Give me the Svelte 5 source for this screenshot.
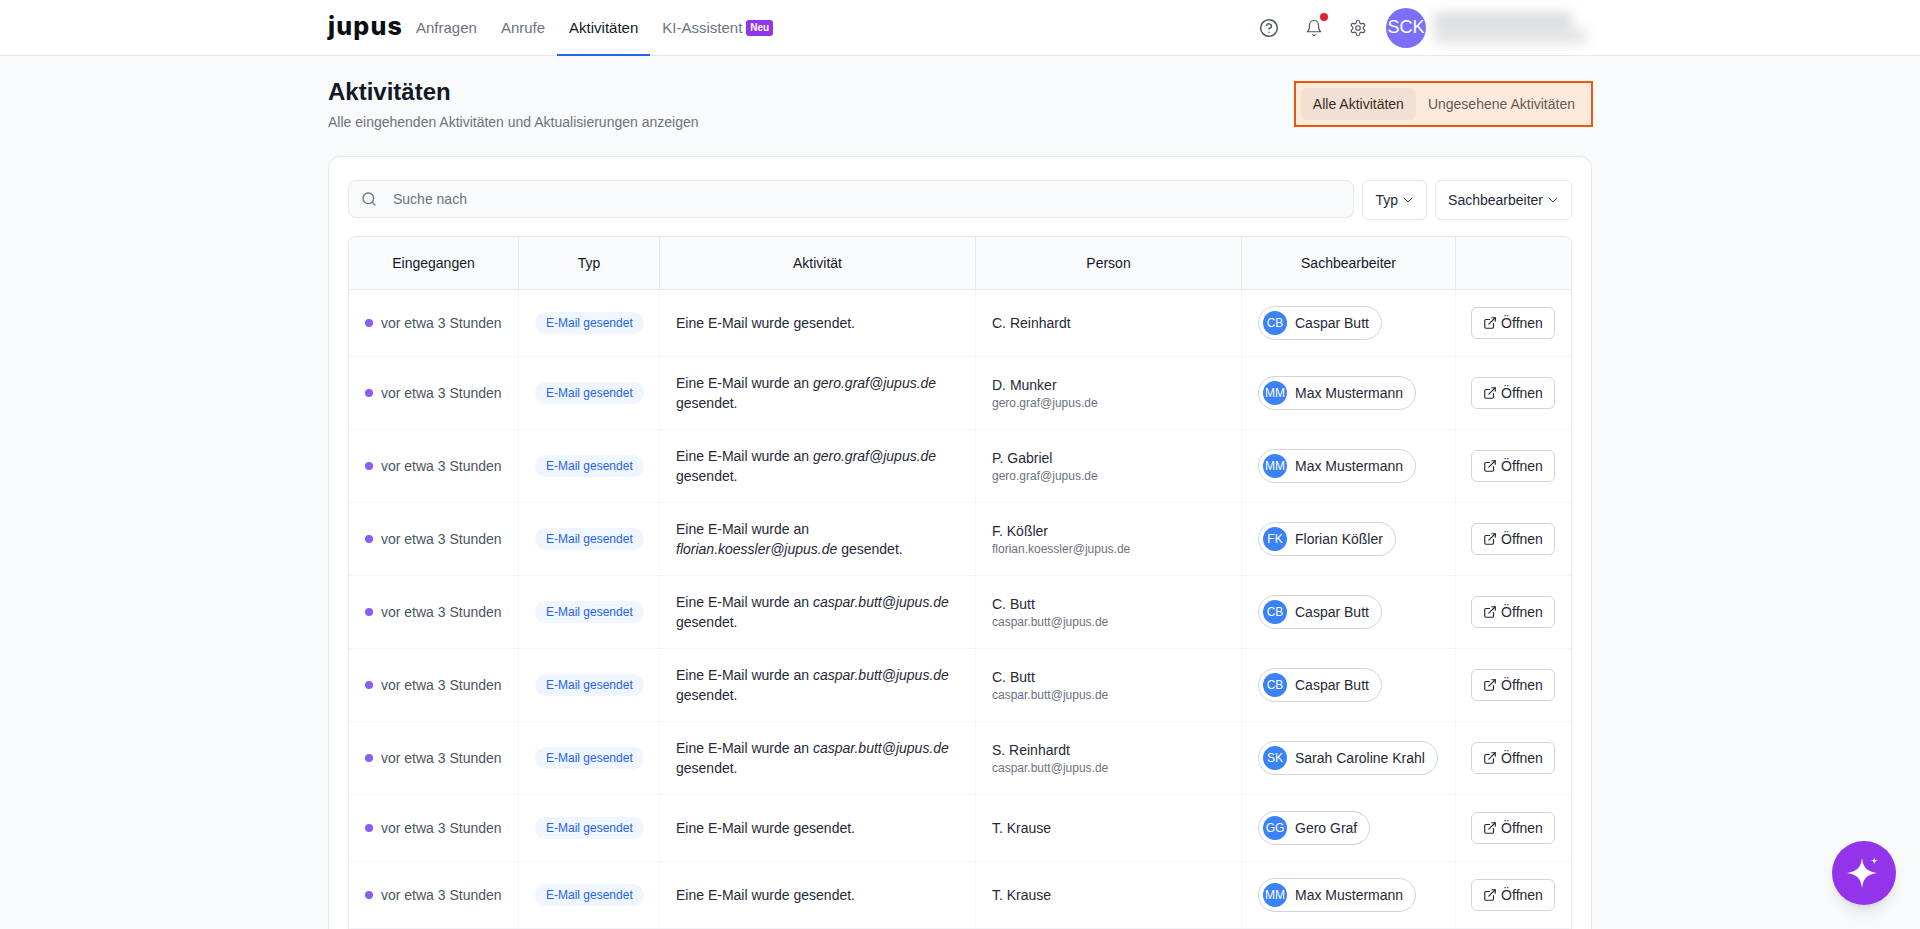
<script lang="ts">
  const rows = [
    { text: "", person: "C. Reinhardt", mail: "", agent: "Caspar Butt", initials: "CB" },
    { text: "gero.graf@jupus.de", person: "D. Munker", mail: "gero.graf@jupus.de", agent: "Max Mustermann", initials: "MM" },
    { text: "gero.graf@jupus.de", person: "P. Gabriel", mail: "gero.graf@jupus.de", agent: "Max Mustermann", initials: "MM" },
    { text: "florian.koessler@jupus.de", person: "F. Kößler", mail: "florian.koessler@jupus.de", agent: "Florian Kößler", initials: "FK", wrap: true },
    { text: "caspar.butt@jupus.de", person: "C. Butt", mail: "caspar.butt@jupus.de", agent: "Caspar Butt", initials: "CB" },
    { text: "caspar.butt@jupus.de", person: "C. Butt", mail: "caspar.butt@jupus.de", agent: "Caspar Butt", initials: "CB" },
    { text: "caspar.butt@jupus.de", person: "S. Reinhardt", mail: "caspar.butt@jupus.de", agent: "Sarah Caroline Krahl", initials: "SK" },
    { text: "", person: "T. Krause", mail: "", agent: "Gero Graf", initials: "GG" },
    { text: "", person: "T. Krause", mail: "", agent: "Max Mustermann", initials: "MM" },
  ];
  const navItems = ["Anfragen", "Anrufe", "Aktivitäten"];
</script>

<div class="page">
  <header class="topbar">
    <div class="topbar-inner">
      <div class="left">
        <span class="logo">jupus</span>
        <nav class="nav">
          {#each navItems as item}
            <span class="nav-item" class:active={item === "Aktivitäten"}>{item}</span>
          {/each}
          <span class="nav-item">KI-Assistent <span class="new-badge">Neu</span></span>
        </nav>
      </div>
      <div class="right">
        <svg class="icon help" viewBox="0 0 24 24"><circle cx="12" cy="12" r="10" /><path d="M9.09 9a3 3 0 0 1 5.83 1c0 2-3 3-3 3" /><path d="M12 17h.01" /></svg>
        <span class="bell-wrap">
          <svg class="icon bell" viewBox="0 0 24 24"><path d="M6 8a6 6 0 0 1 12 0c0 7 3 9 3 9H3s3-2 3-9" /><path d="M10.3 21a1.94 1.94 0 0 0 3.4 0" /></svg>
          <span class="red-dot"></span>
        </span>
        <svg class="icon gear" viewBox="0 0 24 24"><path d="M12.22 2h-.44a2 2 0 0 0-2 2v.18a2 2 0 0 1-1 1.73l-.43.25a2 2 0 0 1-2 0l-.15-.08a2 2 0 0 0-2.73.73l-.22.38a2 2 0 0 0 .73 2.73l.15.1a2 2 0 0 1 1 1.72v.51a2 2 0 0 1-1 1.74l-.15.09a2 2 0 0 0-.73 2.73l.22.38a2 2 0 0 0 2.73.73l.15-.08a2 2 0 0 1 2 0l.43.25a2 2 0 0 1 1 1.73V20a2 2 0 0 0 2 2h.44a2 2 0 0 0 2-2v-.18a2 2 0 0 1 1-1.73l.43-.25a2 2 0 0 1 2 0l.15.08a2 2 0 0 0 2.73-.73l.22-.39a2 2 0 0 0-.73-2.73l-.15-.08a2 2 0 0 1-1-1.74v-.5a2 2 0 0 1 1-1.74l.15-.09a2 2 0 0 0 .73-2.73l-.22-.38a2 2 0 0 0-2.73-.73l-.15.08a2 2 0 0 1-2 0l-.43-.25a2 2 0 0 1-1-1.73V4a2 2 0 0 0-2-2z" /><circle cx="12" cy="12" r="3" /></svg>
        <span class="avatar">SCK</span>
        <div class="user-blur">
          <span class="blur-line one"></span>
          <span class="blur-line two"></span>
        </div>
      </div>
    </div>
  </header>

  <main class="content">
    <div class="head">
      <div>
        <h1>Aktivitäten</h1>
        <p>Alle eingehenden Aktivitäten und Aktualisierungen anzeigen</p>
      </div>
      <div class="tabs">
        <span class="tab selected">Alle Aktivitäten</span>
        <span class="tab">Ungesehene Aktivitäten</span>
      </div>
    </div>

    <section class="card">
      <div class="filters">
        <div class="search">
          <svg class="icon search-icon" viewBox="0 0 24 24"><circle cx="11" cy="11" r="8" /><path d="m21 21-4.3-4.3" /></svg>
          <span>Suche nach</span>
        </div>
        <div class="select">Typ <svg class="icon chev" viewBox="0 0 24 24"><path d="m6 9 6 6 6-6" /></svg></div>
        <div class="select">Sachbearbeiter <svg class="icon chev" viewBox="0 0 24 24"><path d="m6 9 6 6 6-6" /></svg></div>
      </div>

      <div class="table-wrap">
        <table>
          <colgroup>
            <col style="width: 169px" />
            <col style="width: 141px" />
            <col style="width: 316px" />
            <col style="width: 266px" />
            <col style="width: 214px" />
            <col />
          </colgroup>
          <thead>
            <tr>
              <th>Eingegangen</th>
              <th>Typ</th>
              <th>Aktivität</th>
              <th>Person</th>
              <th>Sachbearbeiter</th>
              <th></th>
            </tr>
          </thead>
          <tbody>
            {#each rows as row}
              <tr>
                <td>
                  <div class="when"><span class="dot"></span>vor etwa 3 Stunden</div>
                </td>
                <td><span class="pill">E-Mail gesendet</span></td>
                <td class="activity">
                  {#if row.text}
                    Eine E-Mail wurde an {#if row.wrap}<br />{/if}<em>{row.text}</em> gesendet.
                  {:else}
                    Eine E-Mail wurde gesendet.
                  {/if}
                </td>
                <td>
                  <div class="person">{row.person}</div>
                  {#if row.mail}<div class="mail">{row.mail}</div>{/if}
                </td>
                <td>
                  <span class="chip"><span class="chip-avatar">{row.initials}</span>{row.agent}</span>
                </td>
                <td class="action">
                  <span class="open">
                    <svg class="icon ext" viewBox="0 0 24 24"><path d="M15 3h6v6" /><path d="M10 14 21 3" /><path d="M18 13v6a2 2 0 0 1-2 2H5a2 2 0 0 1-2-2V8a2 2 0 0 1 2-2h6" /></svg>
                    Öffnen
                  </span>
                </td>
              </tr>
            {/each}
          </tbody>
        </table>
      </div>
    </section>
  </main>

  <div class="fab">
    <svg viewBox="0 0 64 64" width="64" height="64">
      <path d="M30 17 C31.4 26.5 34.5 30.5 45 32 C34.5 33.5 31.4 37.5 30 47 C28.6 37.5 25.5 33.5 15 32 C25.5 30.5 28.6 26.5 30 17 Z" fill="#fff" />
      <path d="M42.3 16 C42.6 18.8 43.2 19.4 46 19.7 C43.2 20 42.6 20.6 42.3 23.4 C42 20.6 41.4 20 38.6 19.7 C41.4 19.4 42 18.8 42.3 16 Z" fill="#fff" />
    </svg>
  </div>
</div>

<style>
  :global(body) {
    margin: 0;
    background: #f9fafb;
    font-family: "Liberation Sans", Arial, sans-serif;
    color: #111827;
  }

  .page {
    height: 929px;
    overflow: hidden;
  }

  .icon {
    fill: none;
    stroke: currentColor;
    stroke-width: 2;
    stroke-linecap: round;
    stroke-linejoin: round;
    flex: none;
  }

  .topbar {
    height: 55px;
    background: #fff;
    border-bottom: 1px solid #e5e7eb;
  }

  .topbar-inner {
    width: 1264px;
    margin: 0 auto;
    height: 100%;
    display: flex;
    justify-content: space-between;
  }

  .left,
  .right {
    display: flex;
    align-items: center;
  }

  .left {
    align-items: stretch;
  }

  .logo {
    width: 76px;
    font-family: "Inter", sans-serif;
    font-weight: 800;
    font-size: 25px;
    letter-spacing: 1.2px;
    line-height: 52px;
    color: #0b0f14;
  }

  .nav {
    display: flex;
  }

  .nav-item {
    display: flex;
    align-items: center;
    gap: 4px;
    height: 56px;
    box-sizing: border-box;
    padding: 1px 12px 0;
    font-size: 15px;
    color: #6b7280;
    border-bottom: 2px solid transparent;
  }

  .nav-item.active {
    color: #111827;
    border-bottom-color: #2563eb;
  }

  .new-badge {
    background: #9333ea;
    color: #fff;
    font-size: 10px;
    font-weight: 700;
    line-height: 16px;
    padding: 0 4px;
    border-radius: 3px;
  }

  .right {
    color: #4b5563;
  }

  .help {
    width: 20px;
    height: 20px;
    stroke-width: 1.8;
    margin-right: 26px;
  }

  .bell-wrap {
    position: relative;
    display: flex;
    margin-right: 26px;
  }

  .bell,
  .gear {
    width: 18px;
    height: 18px;
    stroke-width: 1.6;
  }

  .red-dot {
    position: absolute;
    top: -6px;
    right: -5px;
    width: 8px;
    height: 8px;
    border-radius: 50%;
    background: #dc2637;
  }

  .avatar {
    width: 40px;
    height: 40px;
    margin-left: 19px;
    border-radius: 50%;
    background: #7c6ffb;
    color: #fff;
    font-size: 18px;
    display: flex;
    align-items: center;
    justify-content: center;
    overflow: hidden;
  }

  .user-blur {
    width: 166px;
    margin-left: 8px;
    margin-right: -8px;
    display: flex;
    flex-direction: column;
    filter: blur(6px);
  }

  .blur-line {
    display: block;
    height: 16px;
    background: #dcdde0;
  }

  .blur-line.one {
    width: 138px;
  }

  .blur-line.two {
    width: 152px;
    background: #e4e5e7;
  }

  .content {
    width: 1264px;
    margin: 0 auto;
  }

  .head {
    display: flex;
    justify-content: space-between;
    align-items: flex-start;
    padding-top: 20px;
    height: 100px;
    box-sizing: border-box;
  }

  h1 {
    margin: 0;
    font-size: 24px;
    line-height: 32px;
    font-weight: 700;
    color: #111827;
  }

  .head p {
    margin: 4px 0 0;
    font-size: 14px;
    line-height: 20px;
    color: #6b7280;
  }

  .tabs {
    position: relative;
    display: flex;
    margin-top: 5px;
    margin-right: -1px;
    padding: 6px 5px 6px 6px;
    border: 1px solid #e5e7eb;
    border-radius: 8px;
    background: #fff;
  }

  .tabs::after {
    content: "";
    position: absolute;
    inset: -1px;
    border: 2px solid #ea580c;
    background: rgba(249, 115, 22, 0.15);
  }

  .tab {
    padding: 0 12px;
    height: 32px;
    line-height: 32px;
    font-size: 14px;
    color: #4b5563;
    border-radius: 6px;
  }

  .tab.selected {
    background: #f3f4f6;
    color: #111827;
  }

  .card {
    background: #fff;
    border: 1px solid #e5e7eb;
    border-radius: 12px;
    padding: 23px 19px 24px;
    height: 900px;
    box-sizing: border-box;
  }

  .filters {
    display: flex;
    align-items: flex-start;
    gap: 8px;
    margin-bottom: 16px;
  }

  .search {
    flex: 1;
    height: 38px;
    box-sizing: border-box;
    display: flex;
    align-items: center;
    gap: 16px;
    padding: 0 12px;
    background: #f9fafb;
    border: 1px solid #e5e7eb;
    border-radius: 8px;
    font-size: 14px;
    color: #6b7280;
  }

  .search-icon {
    width: 16px;
    height: 16px;
  }

  .select {
    height: 40px;
    box-sizing: border-box;
    display: flex;
    align-items: center;
    gap: 2px;
    padding: 0 10px 0 12px;
    background: #fff;
    border: 1px solid #e5e7eb;
    border-radius: 6px;
    font-size: 14px;
    color: #1f2937;
  }

  .chev {
    width: 16px;
    height: 16px;
    stroke-width: 1.3;
  }

  .table-wrap {
    height: 760px;
    border: 1px solid #e5e7eb;
    border-radius: 8px;
    overflow: hidden;
  }

  table {
    width: 100%;
    table-layout: fixed;
    border-collapse: separate;
    border-spacing: 0;
    font-size: 14px;
    line-height: 20px;
  }

  th {
    height: 52px;
    padding: 0 16px;
    background: #f9fafb;
    font-weight: 400;
    color: #111827;
    text-align: center;
    border-bottom: 1px solid #e5e7eb;
    border-left: 1px solid #e5e7eb;
  }

  th:first-child,
  td:first-child {
    border-left: 0;
  }

  td {
    padding: 16px;
    border-bottom: 1px solid #f3f4f6;
    border-left: 1px solid #f3f4f6;
    color: #1f2937;
    vertical-align: middle;
  }

  .when {
    display: flex;
    align-items: center;
    gap: 8px;
    color: #4b5563;
    white-space: nowrap;
  }

  .dot {
    width: 8px;
    height: 8px;
    border-radius: 50%;
    background: #8b5cf6;
    flex: none;
  }

  .pill {
    display: inline-block;
    padding: 0 11px;
    line-height: 22px;
    font-size: 12px;
    color: #2563eb;
    background: #eff6ff;
    border-radius: 11px;
    white-space: nowrap;
    vertical-align: middle;
  }

  .activity em {
    font-style: italic;
  }

  .person {
    color: #1f2937;
  }

  .mail {
    font-size: 12px;
    line-height: 16px;
    color: #6b7280;
  }

  .chip {
    display: inline-flex;
    align-items: center;
    gap: 8px;
    height: 34px;
    box-sizing: border-box;
    padding: 0 12px 0 4px;
    border: 1px solid #d1d5db;
    border-radius: 17px;
    background: #fff;
    color: #1f2937;
    white-space: nowrap;
    vertical-align: middle;
  }

  .chip-avatar {
    width: 24px;
    height: 24px;
    border-radius: 50%;
    background: #3b82f6;
    color: #fff;
    font-size: 12px;
    display: flex;
    align-items: center;
    justify-content: center;
    flex: none;
  }

  .action {
    text-align: right;
    padding-left: 0;
  }

  .open {
    display: inline-flex;
    align-items: center;
    justify-content: center;
    gap: 4px;
    width: 84px;
    height: 32px;
    box-sizing: border-box;
    border: 1px solid #d1d5db;
    border-radius: 6px;
    color: #1f2937;
    background: #fff;
    vertical-align: middle;
  }

  .ext {
    width: 14px;
    height: 14px;
  }

  .fab {
    position: fixed;
    right: 24px;
    bottom: 24px;
    width: 64px;
    height: 64px;
    border-radius: 50%;
    background: #9333ea;
    box-shadow: 0 10px 15px -3px rgba(0, 0, 0, 0.1), 0 4px 6px -4px rgba(0, 0, 0, 0.1);
  }
</style>
